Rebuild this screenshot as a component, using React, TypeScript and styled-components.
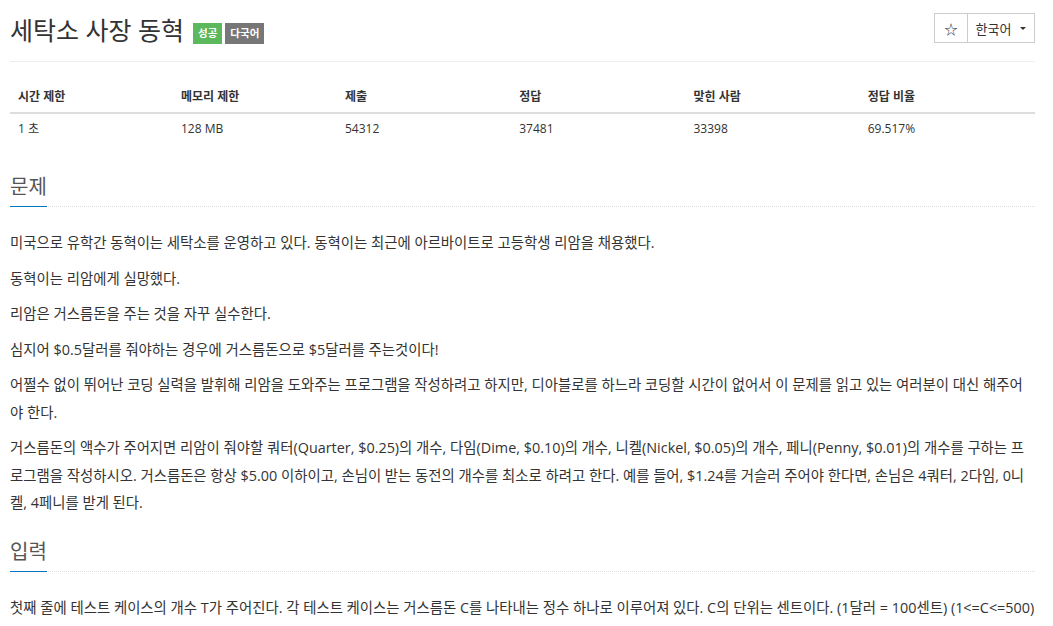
import React from 'react';
import styled, { createGlobalStyle } from 'styled-components';

const GlobalStyle = createGlobalStyle`
  body {
    margin: 0;
    background: #fff;
    font-family: 'Open Sans', 'Noto Sans CJK KR', sans-serif;
    color: #333;
  }
`;

const stats = [
  { label: '시간 제한', value: '1 초', width: '15.9%' },
  { label: '메모리 제한', value: '128 MB', width: '16%' },
  { label: '제출', value: '54312', width: '17%' },
  { label: '정답', value: '37481', width: '17%' },
  { label: '맞힌 사람', value: '33398', width: '17%' },
  { label: '정답 비율', value: '69.517%', width: '17.1%' },
];

const description = [
  '미국으로 유학간 동혁이는 세탁소를 운영하고 있다. 동혁이는 최근에 아르바이트로 고등학생 리암을 채용했다.',
  '동혁이는 리암에게 실망했다.',
  '리암은 거스름돈을 주는 것을 자꾸 실수한다.',
  '심지어 $0.5달러를 줘야하는 경우에 거스름돈으로 $5달러를 주는것이다!',
  '어쩔수 없이 뛰어난 코딩 실력을 발휘해 리암을 도와주는 프로그램을 작성하려고 하지만, 디아블로를 하느라 코딩할 시간이 없어서 이 문제를 읽고 있는 여러분이 대신 해주어야 한다.',
  '거스름돈의 액수가 주어지면 리암이 줘야할 쿼터(Quarter, $0.25)의 개수, 다임(Dime, $0.10)의 개수, 니켈(Nickel, $0.05)의 개수, 페니(Penny, $0.01)의 개수를 구하는 프로그램을 작성하시오. 거스름돈은 항상 $5.00 이하이고, 손님이 받는 동전의 개수를 최소로 하려고 한다. 예를 들어, $1.24를 거슬러 주어야 한다면, 손님은 4쿼터, 2다임, 0니켈, 4페니를 받게 된다.',
];

const App = () => {
  return (
    <Container>
      <GlobalStyle />
      <PageHeader>
        <Title>
          세탁소 사장 동혁
          <Label color="#5cb85c">성공</Label>
          <Label color="#777">다국어</Label>
        </Title>
        <BtnGroup>
          <Btn>☆</Btn>
          <Btn wide>
            한국어 <Caret />
          </Btn>
        </BtnGroup>
      </PageHeader>

      <StatTable>
        <thead>
          <tr>
            {stats.map(s => (
              <th key={s.label} style={{ width: s.width }}>
                {s.label}
              </th>
            ))}
          </tr>
        </thead>
        <tbody>
          <tr>
            {stats.map(s => (
              <td key={s.label}>{s.value}</td>
            ))}
          </tr>
        </tbody>
      </StatTable>

      <Section>
        <Headline>
          <h2>문제</h2>
        </Headline>
        <ProblemText>
          {description.map((p, idx) => (
            <p key={idx}>{p}</p>
          ))}
        </ProblemText>
      </Section>

      <Section>
        <Headline>
          <h2>입력</h2>
        </Headline>
        <ProblemText>
          <p>
            첫째 줄에 테스트 케이스의 개수 T가 주어진다. 각 테스트 케이스는 거스름돈 C를 나타내는 정수 하나로 이루어져 있다. C의 단위는 센트이다. (1달러 = 100센트) (1&lt;=C&lt;=500)
          </p>
        </ProblemText>
      </Section>
    </Container>
  );
};

export default App;

const Container = styled.div`
  padding: 0 18px 0 10px;
`;

const PageHeader = styled.div`
  display: flex;
  justify-content: space-between;
  align-items: flex-start;
  height: 61px;
  border-bottom: 1px solid #eee;
`;

const Title = styled.h1`
  margin: 12px 0 0;
  font-size: 25px;
  font-weight: 400;
  line-height: 36px;
  color: #333;
  display: flex;
  align-items: center;
`;

const Label = styled.span<{ color: string }>`
  display: inline-block;
  background: ${p => p.color};
  color: #fff;
  font-size: 10.5px;
  font-weight: 700;
  line-height: 21px;
  height: 21px;
  padding: 0 5px;
  margin: 7px 0 0 3px;
  &:first-of-type {
    margin-left: 9px;
  }
`;

const BtnGroup = styled.div`
  display: flex;
  margin-top: 13px;
`;

const Btn = styled.div<{ wide?: boolean }>`
  height: 28px;
  box-sizing: content-box;
  border: 1px solid #ccc;
  width: ${p => (p.wide ? '66px' : '32px')};
  margin-left: ${p => (p.wide ? '-1px' : '0')};
  display: flex;
  align-items: center;
  justify-content: center;
  font-size: 13px;
  color: #333;
  gap: 9px;
`;

const Caret = styled.span`
  width: 0;
  height: 0;
  border-left: 3px solid transparent;
  border-right: 3px solid transparent;
  border-top: 3px solid #333;
`;

const StatTable = styled.table`
  width: 100%;
  border-collapse: collapse;
  margin-top: 20px;
  font-size: 12px;

  th {
    text-align: left;
    font-weight: 700;
    padding: 8px;
    line-height: 14px;
    border-bottom: 2px solid #ddd;
  }
  td {
    padding: 8px;
    line-height: 14px;
  }
`;

const Section = styled.section`
  margin-top: 19px;

  &:first-of-type {
    margin-top: 27px;
  }
`;

const Headline = styled.div`
  border-bottom: 1px dotted #ddd;
  margin-bottom: 22px;

  h2 {
    display: inline-block;
    margin: 0 0 -1px;
    padding-bottom: 3px;
    font-size: 20px;
    font-weight: 400;
    line-height: 32px;
    color: #555;
    border-bottom: 1px solid #0076c0;
  }
`;

const ProblemText = styled.div`
  font-size: 14.4px;
  line-height: 27.5px;
  color: #333;

  p {
    margin: 0 0 8px;
  }
`;
